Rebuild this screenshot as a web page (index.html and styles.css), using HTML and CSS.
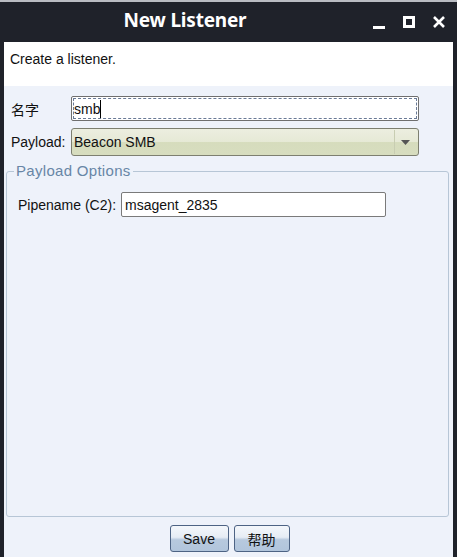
FILE: index.html
```html
<!DOCTYPE html>
<html>
<head>
<meta charset="utf-8">
<link rel="stylesheet" href="styles.css">
</head>
<body>
<div class="window">
  <div class="titlebar">
    <div class="title">New Listener</div>
    <div class="controls">
      <svg class="ctl" width="14" height="14" viewBox="0 0 14 14"><rect x="1" y="11" width="12" height="3" fill="#fff"/></svg>
      <svg class="ctl" width="14" height="14" viewBox="0 0 14 14"><rect x="2.5" y="2.5" width="9" height="9" fill="none" stroke="#fff" stroke-width="3"/></svg>
      <svg class="ctl" width="14" height="14" viewBox="0 0 14 14"><path d="M2 2 L12 12 M12 2 L2 12" stroke="#fff" stroke-width="2.6"/></svg>
    </div>
  </div>
  <div class="frame">
    <div class="desc">Create a listener.</div>
    <div class="content">
      <div class="row">
        <span class="label">名字</span>
        <div class="input focused"><span>smb</span><span class="caret"></span></div>
      </div>
      <div class="row">
        <span class="label">Payload:</span>
        <div class="select">
          <span class="sel-text">Beacon SMB</span>
          <span class="sel-btn"><svg width="9" height="5" viewBox="0 0 9 5"><path d="M0 0 H9 L4.5 5 Z" fill="#555"/></svg></span>
        </div>
      </div>
      <div class="group">
        <span class="legend">Payload Options</span>
        <div class="prow">
          <span class="plabel">Pipename (C2):</span>
          <div class="input pinput">msagent_2835</div>
        </div>
      </div>
      <div class="buttons">
        <button class="btn save">Save</button>
        <button class="btn help">帮助</button>
      </div>
    </div>
  </div>
</div>
</body>
</html>
```

FILE: styles.css
```css
* { box-sizing: border-box; }
html, body {
  margin: 0;
  padding: 0;
  width: 457px;
  height: 557px;
  overflow: hidden;
  background: #1f222a;
  font-family: "Liberation Sans", Arial, "Noto Sans CJK SC", sans-serif;
  font-size: 14px;
  color: #111;
}
.window {
  width: 457px;
  height: 557px;
  display: flex;
  flex-direction: column;
  border-top: 2px solid #b9bcc2;
}
.titlebar {
  height: 40px;
  position: relative;
  display: flex;
  align-items: center;
  background: #1f222a;
}
.title {
  position: absolute;
  left: 0;
  width: 370px;
  top: 5px;
  text-align: center;
  color: #fff;
  font-family: "Noto Sans", "Open Sans", sans-serif;
  font-weight: 700;
  font-size: 19px;
  letter-spacing: -0.2px;
}
.controls {
  margin-left: auto;
  display: flex;
  gap: 16px;
  padding-right: 11px;
}
.ctl { display: block; }
.frame {
  flex: 1;
  margin: 0 4px;
  background: #eef2fa;
  display: flex;
  flex-direction: column;
}
.desc {
  background: #fff;
  height: 44px;
  padding: 9px 0 0 6px;
  font-size: 14px;
}
.content {
  flex: 1;
  display: flex;
  flex-direction: column;
  padding: 10px 0 0 0;
}
.row {
  display: flex;
  align-items: center;
  margin-bottom: 7px;
}
.label {
  width: 67px;
  padding-left: 7px;
}
.input {
  background: #fff;
  border: 1px solid #7a7a7a;
  border-radius: 2px;
  height: 25px;
  display: flex;
  align-items: center;
  padding-left: 3px;
}
.focused {
  width: 348px;
  border-color: #6f6f6f;
  outline: 1px dashed #6a7a96;
  outline-offset: -3px;
  padding-left: 2px;
}
.caret {
  display: inline-block;
  width: 1px;
  height: 18px;
  background: #000;
}
.select {
  width: 348px;
  height: 28px;
  border: 1px solid #7d7f70;
  border-radius: 3px;
  background: linear-gradient(#eceee0 0%, #e6e9d6 48%, #d6dcbd 52%, #d7ddbf 100%);
  display: flex;
  align-items: center;
}
.sel-text {
  flex: 1;
  padding-left: 2px;
}
.sel-btn {
  width: 22px;
  height: 24px;
  margin-right: 2px;
  border-left: 1px solid #c8cdb2;
  display: flex;
  align-items: center;
  justify-content: center;
}
.group {
  margin: 8px 4px 0 2px;
  border: 1px solid #b7c6d6;
  border-radius: 3px;
  height: 346px;
  position: relative;
  padding: 20px 0 0 0;
}
.legend {
  position: absolute;
  top: -10px;
  left: 7px;
  padding: 0 2px;
  background: #eef2fa;
  color: #6886a6;
  font-size: 15px;
  font-weight: 400;
  letter-spacing: 0.3px;
  line-height: 18px;
}
.prow {
  display: flex;
  align-items: center;
}
.plabel {
  width: 114px;
  padding-left: 11px;
}
.pinput {
  width: 265px;
  height: 25px;
  padding-left: 3px;
}
.buttons {
  display: flex;
  justify-content: center;
  gap: 5px;
  margin-top: 8px;
}
.btn {
  height: 27px;
  border: 1px solid #4d6384;
  border-radius: 3px;
  background: linear-gradient(#f4f7fb 0%, #e6ecf4 45%, #b7c9de 55%, #b1c5dc 100%);
  font-family: "Liberation Sans", Arial, "Noto Sans CJK SC", sans-serif;
  font-size: 14px;
  color: #111;
  padding: 0;
}
.save { width: 59px; margin-left: 2px; }
.help { width: 56px; }
```
